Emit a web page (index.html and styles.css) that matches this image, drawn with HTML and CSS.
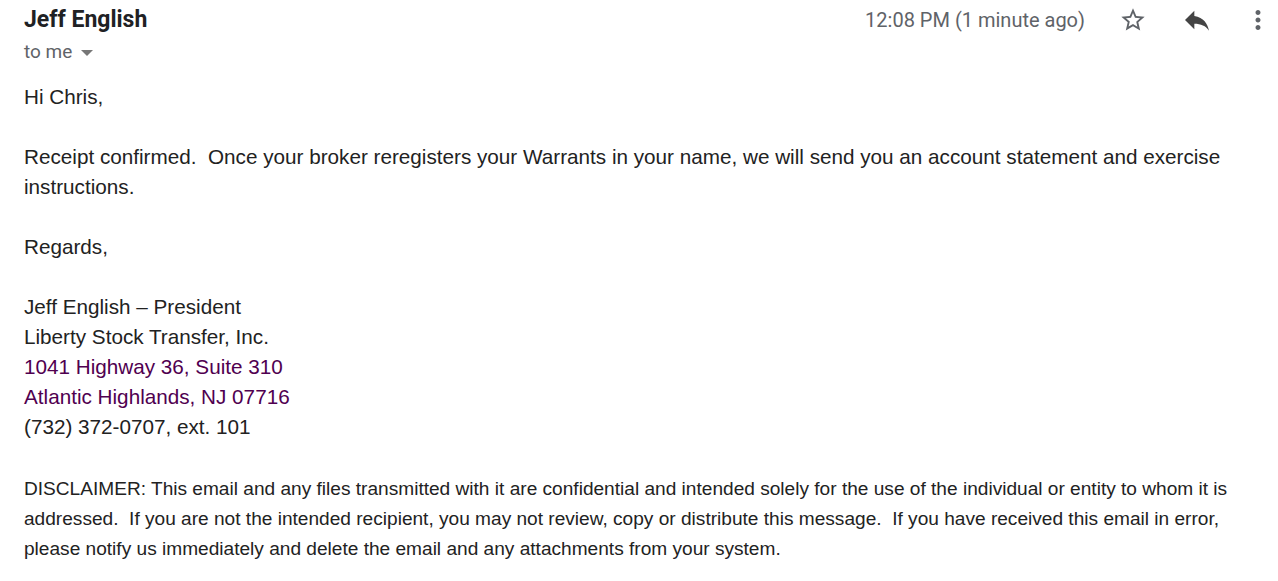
FILE: index.html
```html
<!DOCTYPE html>
<html lang="en">
<head>
  <meta charset="UTF-8">
  <title>Receipt confirmed</title>
  <link rel="stylesheet" href="styles.css">
</head>
<body>
  <div class="email">
    <div class="email-header">
      <div class="sender-block">
        <div class="sender-name">Jeff English</div>
        <div class="recipient">to me <span class="caret"></span></div>
      </div>
      <div class="header-actions">
        <span class="timestamp">12:08 PM (1 minute ago)</span>
        <span class="icon-btn star">
          <svg viewBox="0 0 24 24" width="28" height="28"><path d="M22 9.24l-7.19-.62L12 2 9.19 8.63 2 9.24l5.46 4.73L5.82 21 12 17.27 18.18 21l-1.63-7.03L22 9.24zM12 15.4l-3.76 2.27 1-4.28-3.32-2.88 4.38-.38L12 6.1l1.71 4.04 4.38.38-3.32 2.88 1 4.28L12 15.4z"/></svg>
        </span>
        <span class="icon-btn reply">
          <svg viewBox="0 0 24 24" width="32" height="32"><path d="M10 9V5l-7 7 7 7v-4.1c5 0 8.5 1.6 11 5.1-1-5-4-10-11-11z"/></svg>
        </span>
        <span class="icon-btn more">
          <svg viewBox="0 0 24 24" width="30" height="30"><path d="M12 8c1.1 0 2-.9 2-2s-.9-2-2-2-2 .9-2 2 .9 2 2 2zm0 2c-1.1 0-2 .9-2 2s.9 2 2 2 2-.9 2-2-.9-2-2-2zm0 6c-1.1 0-2 .9-2 2s.9 2 2 2 2-.9 2-2-.9-2-2-2z"/></svg>
        </span>
      </div>
    </div>

    <div class="email-body">
      <p>Hi Chris,</p>
      <p>Receipt confirmed.&nbsp; Once your broker reregisters your Warrants in your name, we will send you an account statement and exercise instructions.</p>
      <p>Regards,</p>
      <p class="signature">
        Jeff English – President<br>
        Liberty Stock Transfer, Inc.<br>
        <a class="addr" href="#">1041 Highway 36, Suite 310</a><br>
        <a class="addr" href="#">Atlantic Highlands, NJ 07716</a><br>
        (732) 372-0707, ext. 101
      </p>
      <p class="disclaimer">DISCLAIMER: This email and any files transmitted with it are confidential and intended solely for the use of the individual or entity to whom it is addressed.&nbsp; If you are not the intended recipient, you may not review, copy or distribute this message.&nbsp; If you have received this email in error, please notify us immediately and delete the email and any attachments from your system.</p>
    </div>
  </div>
</body>
</html>
```

FILE: styles.css
```css
/* Page */
body {
  margin: 0;
  background: #fff;
  font-family: Roboto, Arial, sans-serif;
}
.email {
  padding: 5px 0 0 24px;
}
/* Header row */
.email-header {
  display: flex;
  justify-content: space-between;
  align-items: flex-start;
}
.sender-name {
  font-size: 23px;
  font-weight: bold;
  line-height: 30px;
  color: #202124;
}
.recipient {
  font-size: 19px;
  line-height: 34px;
  color: #5f6368;
  display: flex;
  align-items: center;
}
.caret {
  display: inline-block;
  width: 0;
  height: 0;
  margin-left: 9px;
  margin-top: 2px;
  border-left: 6px solid transparent;
  border-right: 6px solid transparent;
  border-top: 6px solid #777;
}
.header-actions {
  display: flex;
  align-items: center;
  height: 40px;
  margin-top: -5px;
}
.timestamp {
  font-size: 20px;
  color: #5f6368;
  margin-right: 4px;
}
.icon-btn {
  width: 40px;
  height: 40px;
  display: flex;
  align-items: center;
  justify-content: center;
  margin-left: 24px;
}
.icon-btn svg {
  fill: #5f6368;
}
.reply svg {
  fill: #444;
}
.more {
  margin-left: 21px;
}
/* Message body */
.email-body {
  margin-top: 13px;
  font-family: "Liberation Sans", Arial, sans-serif;
  font-size: 20.7px;
  line-height: 30px;
  color: #222;
  padding-right: 20px;
}
.email-body p {
  margin: 0 0 30px;
}
.addr {
  color: #500050;
  text-decoration: none;
}
.disclaimer {
  font-size: 19.1px;
  padding-top: 2px;
  max-width: 1222px;
}
```
